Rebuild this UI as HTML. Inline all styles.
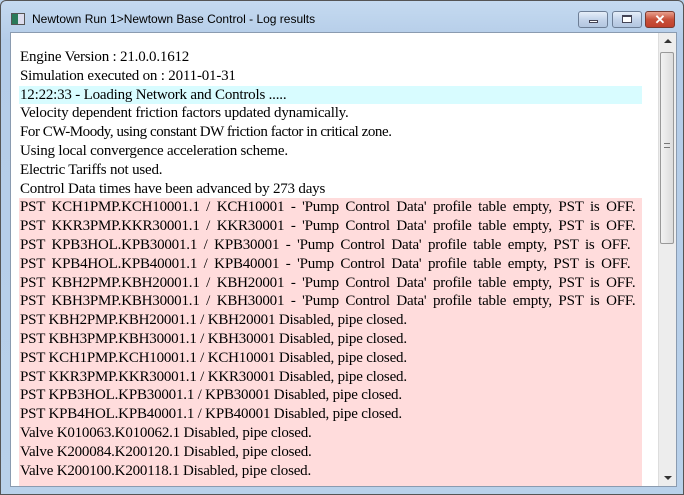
<!DOCTYPE html>
<html><head><style>
*{margin:0;padding:0;box-sizing:border-box}
body{width:684px;height:495px;overflow:hidden;background:#b9d1ea;font-family:"Liberation Sans",sans-serif;position:relative}
.frame{position:absolute;left:0;top:0;width:684px;height:495px;border:1px solid #555;border-radius:6px 6px 0 0;background:linear-gradient(#c5daf0,#b4cce8 40px,#b9d1ea)}
.title{position:absolute;left:31px;top:11px;font-size:12px;color:#000}
.icon{position:absolute;left:10px;top:12px;width:14px;height:12px;border:1px solid #555;background:linear-gradient(90deg,#2a7a5a 50%,#dde 50%)}
.btn{position:absolute;top:10px;height:17px;border:1px solid #6d7e96;border-radius:3px;background:linear-gradient(#e6eef8,#c4d4ea 50%,#b3c6e0)}
.close{background:linear-gradient(#e8a08e,#c8503a 50%,#c0402c);border-color:#7a3a30}
.client{position:absolute;left:9px;top:31px;width:667px;height:455px;background:#fff;border:1px solid #8a9bb0;overflow:hidden}
.txt{position:absolute;left:8px;top:15px;width:623px;font-family:"Liberation Serif",serif;font-size:15px;line-height:18.8px;color:#000;white-space:nowrap;letter-spacing:-0.2px}
.txt div{padding-left:1px;height:18.8px;overflow:hidden}
.c{background:#d8fcff}.p{background:#ffdcdc}
.w{word-spacing:3px}
.sb{position:absolute;right:0;top:0;width:18px;height:453px;background:#ededed;border-left:1px solid #ddd}
.thumb{position:absolute;left:1px;top:19px;width:14px;height:192px;border:1px solid #999;border-radius:2px;background:linear-gradient(90deg,#f2f2f2,#dcdcdc)}
</style></head><body>
<div class="frame">
<div class="icon"></div>
<div class="title">Newtown Run 1&gt;Newtown Base Control - Log results</div>
<div class="btn" style="left:577px;width:30px"><div style="position:absolute;left:10px;top:8px;width:9px;height:3px;border:1px solid #445;background:#fff"></div></div>
<div class="btn" style="left:611px;width:30px"><div style="position:absolute;left:9px;top:3px;width:10px;height:8px;border:1px solid #445;border-top-width:2px;background:#fff"></div></div>
<div class="btn close" style="left:644px;width:30px;color:#fff;font-weight:bold;font-size:13px;text-align:center;line-height:15px">✕</div>
<div class="client">
<div class="txt">
<div>Engine Version : 21.0.0.1612</div>
<div>Simulation executed on : 2011-01-31</div>
<div class="c">12:22:33 - Loading Network and Controls .....</div>
<div>Velocity dependent friction factors updated dynamically.</div>
<div style="letter-spacing:-0.45px">For CW-Moody, using constant DW friction factor in critical zone.</div>
<div>Using local convergence acceleration scheme.</div>
<div>Electric Tariffs not used.</div>
<div>Control Data times have been advanced by 273 days</div>
<div class="p w">PST KCH1PMP.KCH10001.1 / KCH10001 - 'Pump Control Data' profile table empty, PST is OFF.</div>
<div class="p w">PST KKR3PMP.KKR30001.1 / KKR30001 - 'Pump Control Data' profile table empty, PST is OFF.</div>
<div class="p w">PST KPB3HOL.KPB30001.1 / KPB30001 - 'Pump Control Data' profile table empty, PST is OFF.</div>
<div class="p w">PST KPB4HOL.KPB40001.1 / KPB40001 - 'Pump Control Data' profile table empty, PST is OFF.</div>
<div class="p w">PST KBH2PMP.KBH20001.1 / KBH20001 - 'Pump Control Data' profile table empty, PST is OFF.</div>
<div class="p w">PST KBH3PMP.KBH30001.1 / KBH30001 - 'Pump Control Data' profile table empty, PST is OFF.</div>
<div class="p">PST KBH2PMP.KBH20001.1 / KBH20001 Disabled, pipe closed.</div>
<div class="p">PST KBH3PMP.KBH30001.1 / KBH30001 Disabled, pipe closed.</div>
<div class="p">PST KCH1PMP.KCH10001.1 / KCH10001 Disabled, pipe closed.</div>
<div class="p">PST KKR3PMP.KKR30001.1 / KKR30001 Disabled, pipe closed.</div>
<div class="p">PST KPB3HOL.KPB30001.1 / KPB30001 Disabled, pipe closed.</div>
<div class="p">PST KPB4HOL.KPB40001.1 / KPB40001 Disabled, pipe closed.</div>
<div class="p">Valve K010063.K010062.1 Disabled, pipe closed.</div>
<div class="p">Valve K200084.K200120.1 Disabled, pipe closed.</div>
<div class="p">Valve K200100.K200118.1 Disabled, pipe closed.</div>
<div class="p"></div>
</div>
<div class="sb">
<div style="position:absolute;left:5px;top:6px;width:0;height:0;border-left:4px solid transparent;border-right:4px solid transparent;border-bottom:4px solid #333"></div>
<div class="thumb"><div style="position:absolute;left:3px;top:90px;width:6px;height:5px;border-top:1px solid #777;border-bottom:1px solid #777"></div></div>
<div style="position:absolute;left:5px;bottom:6px;width:0;height:0;border-left:4px solid transparent;border-right:4px solid transparent;border-top:4px solid #333"></div>
</div>
</div>
</div>
</body></html>
